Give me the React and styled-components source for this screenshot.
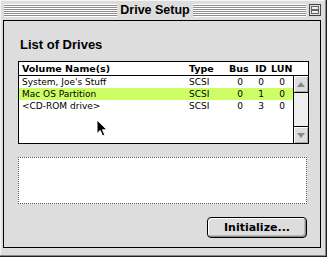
import React from "react";
import styled, { createGlobalStyle } from "styled-components";

const GlobalStyle = createGlobalStyle`
  html, body { margin: 0; padding: 0; background: #fff; }
  body { font-family: "Liberation Sans", Arial, sans-serif; }
`;

const Window = styled.div`
  position: relative;
  width: 327px;
  height: 257px;
  box-sizing: border-box;
  background: #dddddd;
  display: flex;
  flex-direction: column;
  border-right: 1px solid #222;
  border-bottom: 1px solid #222;
  box-shadow: inset -1px -1px 0 #888, inset 1px 1px 0 #f4f4f4;
`;

const TitleBar = styled.div`
  height: 20px;
  display: flex;
  align-items: center;
  padding: 0 5px 0 4px;
  box-sizing: border-box;
`;

const Stripes = styled.div`
  flex: 1;
  height: 13px;
  background: repeating-linear-gradient(#ffffff 0 1px, #8c8c8c 1px 2px);
`;

const Title = styled.div`
  padding: 0 3px;
  font-family: "Liberation Sans", Arial, sans-serif;
  font-weight: bold;
  font-size: 12.5px;
  color: #000;
  line-height: 14px;
`;

const Collapse = styled.svg`
  margin-left: 3px;
  display: block;
`;

const Content = styled.div`
  margin: 0 5px 8px 3px;
  flex: 1;
  border: 1px solid #000;
  padding: 17px 12px 0 14px;
  display: flex;
  flex-direction: column;
`;

const Heading = styled.div`
  font-family: "Liberation Sans", Arial, sans-serif;
  font-weight: bold;
  font-size: 13px;
  line-height: 14px;
  margin-left: 2px;
`;

const ListBox = styled.div`
  margin-top: 9px;
  width: 291px;
  height: 83px;
  box-sizing: border-box;
  border: 1px solid #000;
  background: #fff;
  display: flex;
  flex-direction: column;
`;

const HeaderRow = styled.div`
  height: 13px;
  border-bottom: 1px solid #000;
  display: grid;
  grid-template-columns: 167px 40px 22px 20px 22px;
  align-items: center;
  padding-left: 3px;
  font-family: "DejaVu Sans", Verdana, sans-serif;
  font-weight: bold;
  font-size: 9.5px;
  line-height: 13px;
`;

const Body = styled.div`
  flex: 1;
  display: flex;
  min-height: 0;
`;

const Rows = styled.div`
  flex: 1;
`;

const Row = styled.div`
  height: 12px;
  display: grid;
  grid-template-columns: 167px 40px 22px 20px 22px;
  align-items: center;
  padding-left: 3px;
  background: ${(p) => (p.selected ? "#ccff66" : "transparent")};
  font-family: "DejaVu Sans", Verdana, sans-serif;
  font-size: 9px;
  line-height: 12px;
`;

const Cell = styled.span`
  text-align: ${(p) => p.align || "left"};
  white-space: nowrap;
`;

const ScrollBar = styled.div`
  width: 16px;
  border-left: 1px solid #000;
  background: #eeeeee;
  display: flex;
  flex-direction: column;
  justify-content: space-between;
`;

const Arrow = styled.div`
  height: 16px;
  background: #dddddd;
  display: flex;
  align-items: center;
  justify-content: center;
  border-${(p) => (p.down ? "top" : "bottom")}: 1px solid #000;
  box-shadow: inset 1px 1px 0 #fff, inset -1px -1px 0 #aaa;
`;

const InfoBox = styled.div`
  margin-top: 13px;
  width: 289px;
  height: 47px;
  box-sizing: border-box;
  border: 1px dotted #555;
  background: #fff;
`;

const ButtonRow = styled.div`
  margin-top: 13px;
  display: flex;
  justify-content: flex-end;
  width: 289px;
`;

const Button = styled.button`
  width: 100px;
  height: 21px;
  box-sizing: border-box;
  border: 1px solid #000;
  border-radius: 4px;
  background: #dddddd;
  box-shadow: inset 1px 1px 0 #fff, inset -1px -1px 0 #888, inset -2px -2px 0 #bbb;
  font-family: "DejaVu Sans", Verdana, sans-serif;
  font-weight: bold;
  font-size: 11px;
  color: #000;
  padding: 0;
`;

const Cursor = styled.svg`
  position: absolute;
  left: 96px;
  top: 119px;
`;

const drives = [
  { name: "System, Joe's Stuff", type: "SCSI", bus: 0, id: 0, lun: 0 },
  { name: "Mac OS Partition", type: "SCSI", bus: 0, id: 1, lun: 0, selected: true },
  { name: "<CD-ROM drive>", type: "SCSI", bus: 0, id: 3, lun: 0 },
];

export default function App() {
  return (
    <>
      <GlobalStyle />
      <Window>
        <TitleBar>
          <Stripes />
          <Title>Drive Setup</Title>
          <Stripes />
          <Collapse width="12" height="12" viewBox="0 0 12 12">
            <rect x="0.5" y="0.5" width="11" height="11" fill="#ddd" stroke="#444" />
            <rect x="2.5" y="2.5" width="7" height="3" fill="#eee" stroke="#666" />
            <rect x="2.5" y="6.5" width="7" height="3" fill="#eee" stroke="#666" />
          </Collapse>
        </TitleBar>
        <Content>
          <Heading>List of Drives</Heading>
          <ListBox>
            <HeaderRow>
              <Cell>Volume Name(s)</Cell>
              <Cell>Type</Cell>
              <Cell>Bus</Cell>
              <Cell align="center">ID</Cell>
              <Cell>LUN</Cell>
            </HeaderRow>
            <Body>
              <Rows>
                {drives.map((d) => (
                  <Row key={d.name} selected={d.selected}>
                    <Cell>{d.name}</Cell>
                    <Cell>{d.type}</Cell>
                    <Cell align="center">{d.bus}</Cell>
                    <Cell align="center">{d.id}</Cell>
                    <Cell align="center">{d.lun}</Cell>
                  </Row>
                ))}
              </Rows>
              <ScrollBar>
                <Arrow>
                  <svg width="8" height="5" viewBox="0 0 8 5">
                    <polygon points="0,5 8,5 4,0" fill="#888" />
                  </svg>
                </Arrow>
                <Arrow down>
                  <svg width="8" height="5" viewBox="0 0 8 5">
                    <polygon points="0,0 8,0 4,5" fill="#888" />
                  </svg>
                </Arrow>
              </ScrollBar>
            </Body>
          </ListBox>
          <InfoBox />
          <ButtonRow>
            <Button>Initialize...</Button>
          </ButtonRow>
        </Content>
        <Cursor width="13" height="18" viewBox="0 0 13 18">
          <path d="M1 1 L1 14.5 L4.2 11.5 L6.6 17 L8.8 16 L6.5 10.8 L11 10.8 Z" fill="#000" stroke="#fff" strokeWidth="1" strokeLinejoin="miter" />
        </Cursor>
      </Window>
    </>
  );
}
